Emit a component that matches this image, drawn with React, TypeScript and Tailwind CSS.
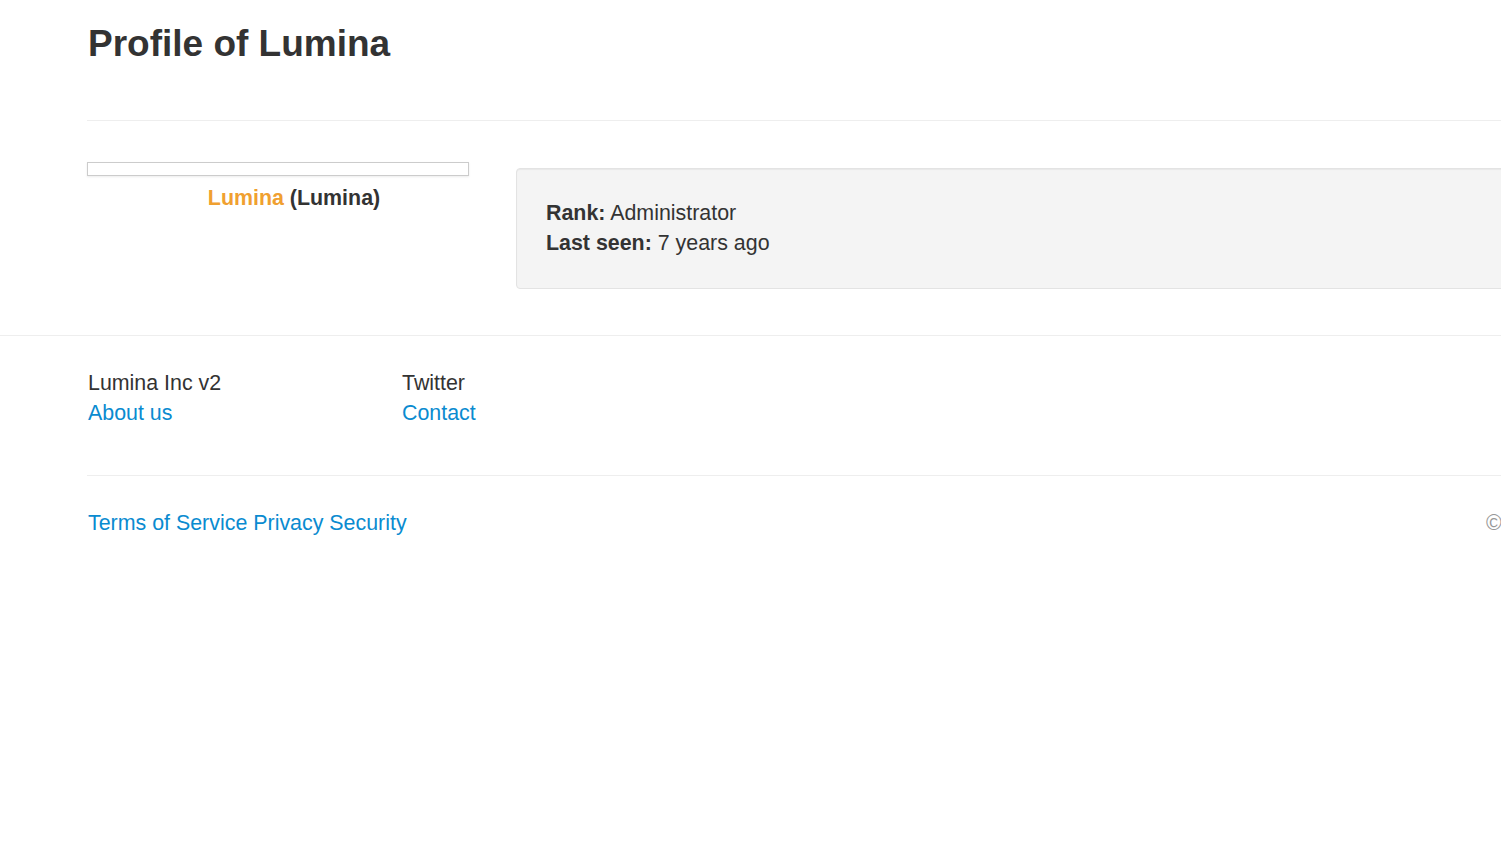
export default function App() {
  return (
    <div className="w-screen min-h-screen overflow-hidden bg-white text-[21.4px] leading-[30px] text-[#333] font-['Liberation_Sans',Arial,sans-serif]">
      {/* Page header */}
      <div className="w-[1500px] ml-[87px]">
        <h1 className="pt-[24px] pl-px text-[37px] leading-[40px] font-bold text-[#333]">Profile of Lumina</h1>
        <div className="mt-[56px] border-t border-[#eee]" />

        {/* Profile body */}
        <div className="flex pt-[41px] pb-[46px]">
          <div className="w-[414px] shrink-0">
            <div className="h-[14px] w-[382px] border border-[#ccc] bg-white shadow-[0_1px_2px_rgba(0,0,0,0.08)]" />
            <p className="mt-[7px] text-center font-bold">
              <span className="text-[#f0a030]">Lumina</span> (Lumina)
            </p>
          </div>
          <div className="ml-[15px] mt-[6px] flex-1 rounded-[4px] border border-[#e3e3e3] bg-[#f4f4f4] px-[29px] py-[29px] shadow-[inset_0_1px_1px_rgba(0,0,0,0.05)]">
            <p>
              <b>Rank:</b> Administrator
            </p>
            <p className="leading-[31px]">
              <b>Last seen:</b> 7 years ago
            </p>
          </div>
        </div>
      </div>

      {/* Footer */}
      <footer className="border-t border-[#eee]">
        <div className="w-[1500px] ml-[88px]">
          <div className="flex pt-[32px] pb-[47px]">
            <div className="w-[314px]">
              <p>Lumina Inc v2</p>
              <a className="block text-[#0a8bd0]">About us</a>
            </div>
            <div>
              <p>Twitter</p>
              <a className="block text-[#0a8bd0]">Contact</a>
            </div>
          </div>
          <div className="-ml-px border-t border-[#eee]" />
          <div className="flex items-center pt-[32px]">
            <div className="w-[1398px] shrink-0 text-[#0a8bd0]">
              <a>Terms of Service</a> <a>Privacy</a> <a>Security</a>
            </div>
            <span className="whitespace-nowrap text-[#999]">© Lumina</span>
          </div>
        </div>
      </footer>
    </div>
  );
}
